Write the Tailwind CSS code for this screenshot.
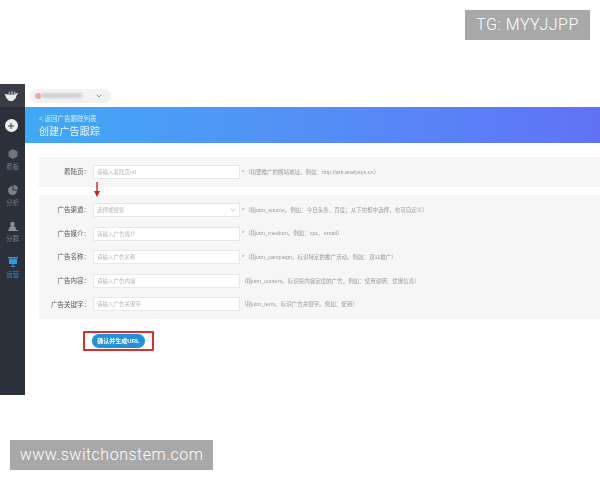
<!DOCTYPE html>
<html lang="zh-CN">
<head>
  <meta charset="UTF-8" />
  <title>创建广告跟踪</title>
  <script src="https://cdn.jsdelivr.net/npm/@tailwindcss/browser@4"></script>
</head>
<body class="bg-white">
<div class="relative w-[600px] h-[480px] overflow-hidden bg-white font-['Liberation_Sans','Noto_Sans_CJK_SC',sans-serif]">

  <!-- screenshot area -->
  <div class="absolute left-0 top-[84px] w-[600px] h-[311px] flex blur-[0.4px]">

    <!-- sidebar -->
    <aside class="w-[25px] shrink-0 bg-[#2b303b] flex flex-col items-center text-[6.500px] text-[#767a83]">
      <div class="w-full h-[23px] bg-[#3a3d44] flex items-center pl-[4px]">
        <svg width="15" height="11" viewBox="0 0 15 12"><path d="M0 4l3 1h8l1-1 3-1-2 3-1 3-3 3H5L2 9z" fill="#ececec"/><path d="M5 1l1 3H4zM8 0l1 4H7zM11 1l1 3h-2z" fill="#d0d0d0"/></svg>
      </div>
      <div class="mt-[12px] mr-[3px] w-[13px] h-[13px] rounded-full bg-[#eeeeee] flex items-center justify-center">
        <svg width="8" height="8" viewBox="0 0 8 8"><path d="M4 1v6M1 4h6" stroke="#3a3d44" stroke-width="1"/></svg>
      </div>
      <div class="mt-[17px] flex flex-col items-center gap-[14px]">
        <div class="flex flex-col items-center">
          <svg width="10" height="10" viewBox="0 0 10 10"><path d="M5 0l4.500 2.500v5L5 10 .5 7.500v-5z" fill="#70747d"/></svg>
          <span class="leading-[8px] mt-[4px]">看板</span>
        </div>
        <div class="flex flex-col items-center">
          <svg width="10" height="10" viewBox="0 0 10 10"><path d="M4.500 1a4.500 4.500 0 1 0 4.500 4.500H4.500z" fill="#7d818a"/><path d="M5.500 0A4.500 4.500 0 0 1 10 4.500H5.500z" fill="#7d818a"/></svg>
          <span class="leading-[8px] mt-[4px]">分析</span>
        </div>
        <div class="flex flex-col items-center">
          <svg width="10" height="10" viewBox="0 0 10 10"><circle cx="4.500" cy="3" r="2.200" fill="#8b8f97"/><path d="M1 9c0-3 1-4 3.500-4S8 6 8 9z" fill="#8b8f97"/><path d="M0 9h10v1H0z" fill="#8b8f97"/></svg>
          <span class="leading-[8px] mt-[4px]">分群</span>
        </div>
        <div class="flex flex-col items-center text-[#2f8fd0]">
          <svg width="10" height="10" viewBox="0 0 10 10"><path d="M0 0h10v1.500H0z" fill="#2d9be0"/><path d="M1 2h8v5H1z" fill="#2d9be0"/><path d="M4.500 7h1v2h1.500v1H3V9h1.500z" fill="#2d9be0"/></svg>
          <span class="leading-[8px] mt-[4px]">运营</span>
        </div>
      </div>
    </aside>

    <main class="flex-1 min-w-0 flex flex-col">
      <!-- top bar -->
      <div class="h-[23px] shrink-0 flex items-center pl-[5px]">
        <div class="w-[81px] h-[14px] rounded-full bg-[#f1f2f4] flex items-center pl-[5px]">
          <span class="w-[6px] h-[6px] rounded-full bg-[#eaa89a] blur-[0.6px]"></span>
          <span class="w-[41px] h-[5px] rounded-full bg-[#cfd1d6] blur-[0.8px]"></span>
          <svg class="ml-[14px]" width="6" height="4" viewBox="0 0 6 4"><path d="M.7.700 3 3 5.300.700" fill="none" stroke="#777" stroke-width=".8"/></svg>
        </div>
      </div>

      <!-- blue header -->
      <div class="h-[36px] shrink-0 bg-gradient-to-r from-[#3fa9f5] to-[#6072f6] pl-[14px] pt-[8px] text-white">
        <div class="text-[6.500px] leading-[7px] text-[#d5ebfb]">&lt; 返回广告跟踪列表</div>
        <div class="mt-[3px] text-[10px] tracking-[0.2px] leading-[14px] text-[#eaf5fd]">创建广告跟踪</div>
      </div>

      <!-- form -->
      <div class="pl-[14px] pt-[14px]">
        <div class="h-[30px] bg-[#f6f6f6] flex items-center">
          <span class="w-[51px] mr-[3px] text-right text-[6.500px] text-[#555]">着陆页：</span>
          <div class="w-[147px] h-[14px] bg-white border border-[#e8e8e8] rounded-[1px] pl-[3px] text-[5.500px] leading-[12px] text-[#b5b5b5]">请输入着陆页url</div>
          <span class="ml-[2px] w-[3px] text-[6px] text-[#999]">*</span>
          <span class="text-[5.500px] text-[#999]">（指要推广的网站地址。例如：http://ark.analysys.cn）</span>
        </div>

        <!-- red arrow between the cards -->
        <div class="h-[8px] relative">
          <svg class="absolute left-[55px] -top-[5px]" width="6" height="15" viewBox="0 0 6 15"><path d="M2.300 0h1.400v9H6l-3 6-3-6h2.300z" fill="#c9252b"/></svg>
        </div>

        <div class="h-[124px] bg-[#f6f6f6] pt-[8px] flex flex-col gap-[9.600px]">
          <div class="h-[14px] flex items-center">
            <span class="w-[51px] mr-[3px] text-right text-[6.500px] text-[#555]">广告渠道：</span>
            <div class="w-[147px] h-[14px] bg-white border border-[#e8e8e8] rounded-[1px] px-[3px] flex items-center justify-between text-[5.500px] text-[#b5b5b5]">
              <span>选择或搜索</span>
              <svg width="6" height="4" viewBox="0 0 6 4"><path d="M.7.700 3 3 5.300.700" fill="none" stroke="#aaa" stroke-width=".7"/></svg>
            </div>
            <span class="ml-[2px] w-[3px] text-[6px] text-[#999]">*</span>
            <span class="text-[5.500px] text-[#999]">（指utm_source。例如：今日头条、百度；从下拉框中选择，也可自定义）</span>
          </div>
          <div class="h-[14px] flex items-center">
            <span class="w-[51px] mr-[3px] text-right text-[6.500px] text-[#555]">广告媒介：</span>
            <div class="w-[147px] h-[14px] bg-white border border-[#e8e8e8] rounded-[1px] pl-[3px] text-[5.500px] leading-[12px] text-[#b5b5b5]">请输入广告媒介</div>
            <span class="ml-[2px] w-[3px] text-[6px] text-[#999]">*</span>
            <span class="text-[5.500px] text-[#999]">（指utm_medium。例如：cpc、email）</span>
          </div>
          <div class="h-[14px] flex items-center">
            <span class="w-[51px] mr-[3px] text-right text-[6.500px] text-[#555]">广告名称：</span>
            <div class="w-[147px] h-[14px] bg-white border border-[#e8e8e8] rounded-[1px] pl-[3px] text-[5.500px] leading-[12px] text-[#b5b5b5]">请输入广告名称</div>
            <span class="ml-[2px] w-[3px] text-[6px] text-[#999]">*</span>
            <span class="text-[5.500px] text-[#999]">（指utm_campaign。标识特定的推广活动。例如：双11推广）</span>
          </div>
          <div class="h-[14px] flex items-center">
            <span class="w-[51px] mr-[3px] text-right text-[6.500px] text-[#555]">广告内容：</span>
            <div class="w-[147px] h-[14px] bg-white border border-[#e8e8e8] rounded-[1px] pl-[3px] text-[5.500px] leading-[12px] text-[#b5b5b5]">请输入广告内容</div>
            <span class="ml-[1px] text-[5.500px] text-[#999]">（指utm_content。标识投内容定位的广告。例如：使用说明、优惠信息）</span>
          </div>
          <div class="h-[14px] flex items-center">
            <span class="w-[51px] mr-[3px] text-right text-[6.500px] text-[#555]">广告关键字：</span>
            <div class="w-[147px] h-[14px] bg-white border border-[#e8e8e8] rounded-[1px] pl-[3px] text-[5.500px] leading-[12px] text-[#b5b5b5]">请输入广告关键字</div>
            <span class="ml-[1px] text-[5.500px] text-[#999]">（指utm_term。标识广告关键字。例如：促销）</span>
          </div>
        </div>

        <!-- submit, with red highlight box -->
        <div class="mt-[12px] ml-[44px] w-[71px] h-[20px] border-2 border-[#d8302c] rounded-[1px] flex items-center justify-center">
          <button class="w-[53px] h-[14px] rounded-full bg-[#2391d8] text-white text-[6px] font-bold">确认并生成URL</button>
        </div>
      </div>
    </main>
  </div>

  <!-- watermarks -->
  <div class="absolute left-[465px] top-[10px] w-[125px] h-[30px] bg-[#a8a8a8] flex items-center justify-center text-white text-[16px] font-['Roboto',sans-serif] font-light tracking-[0.5px]">TG: MYYJJPP</div>
  <div class="absolute left-[10px] top-[440px] w-[203px] h-[30px] bg-[#a8a8a8] flex items-center justify-center text-white text-[16px] font-['Roboto',sans-serif] font-light tracking-[0.5px]">www.switchonstem.com</div>
</div>
</body>
</html>
